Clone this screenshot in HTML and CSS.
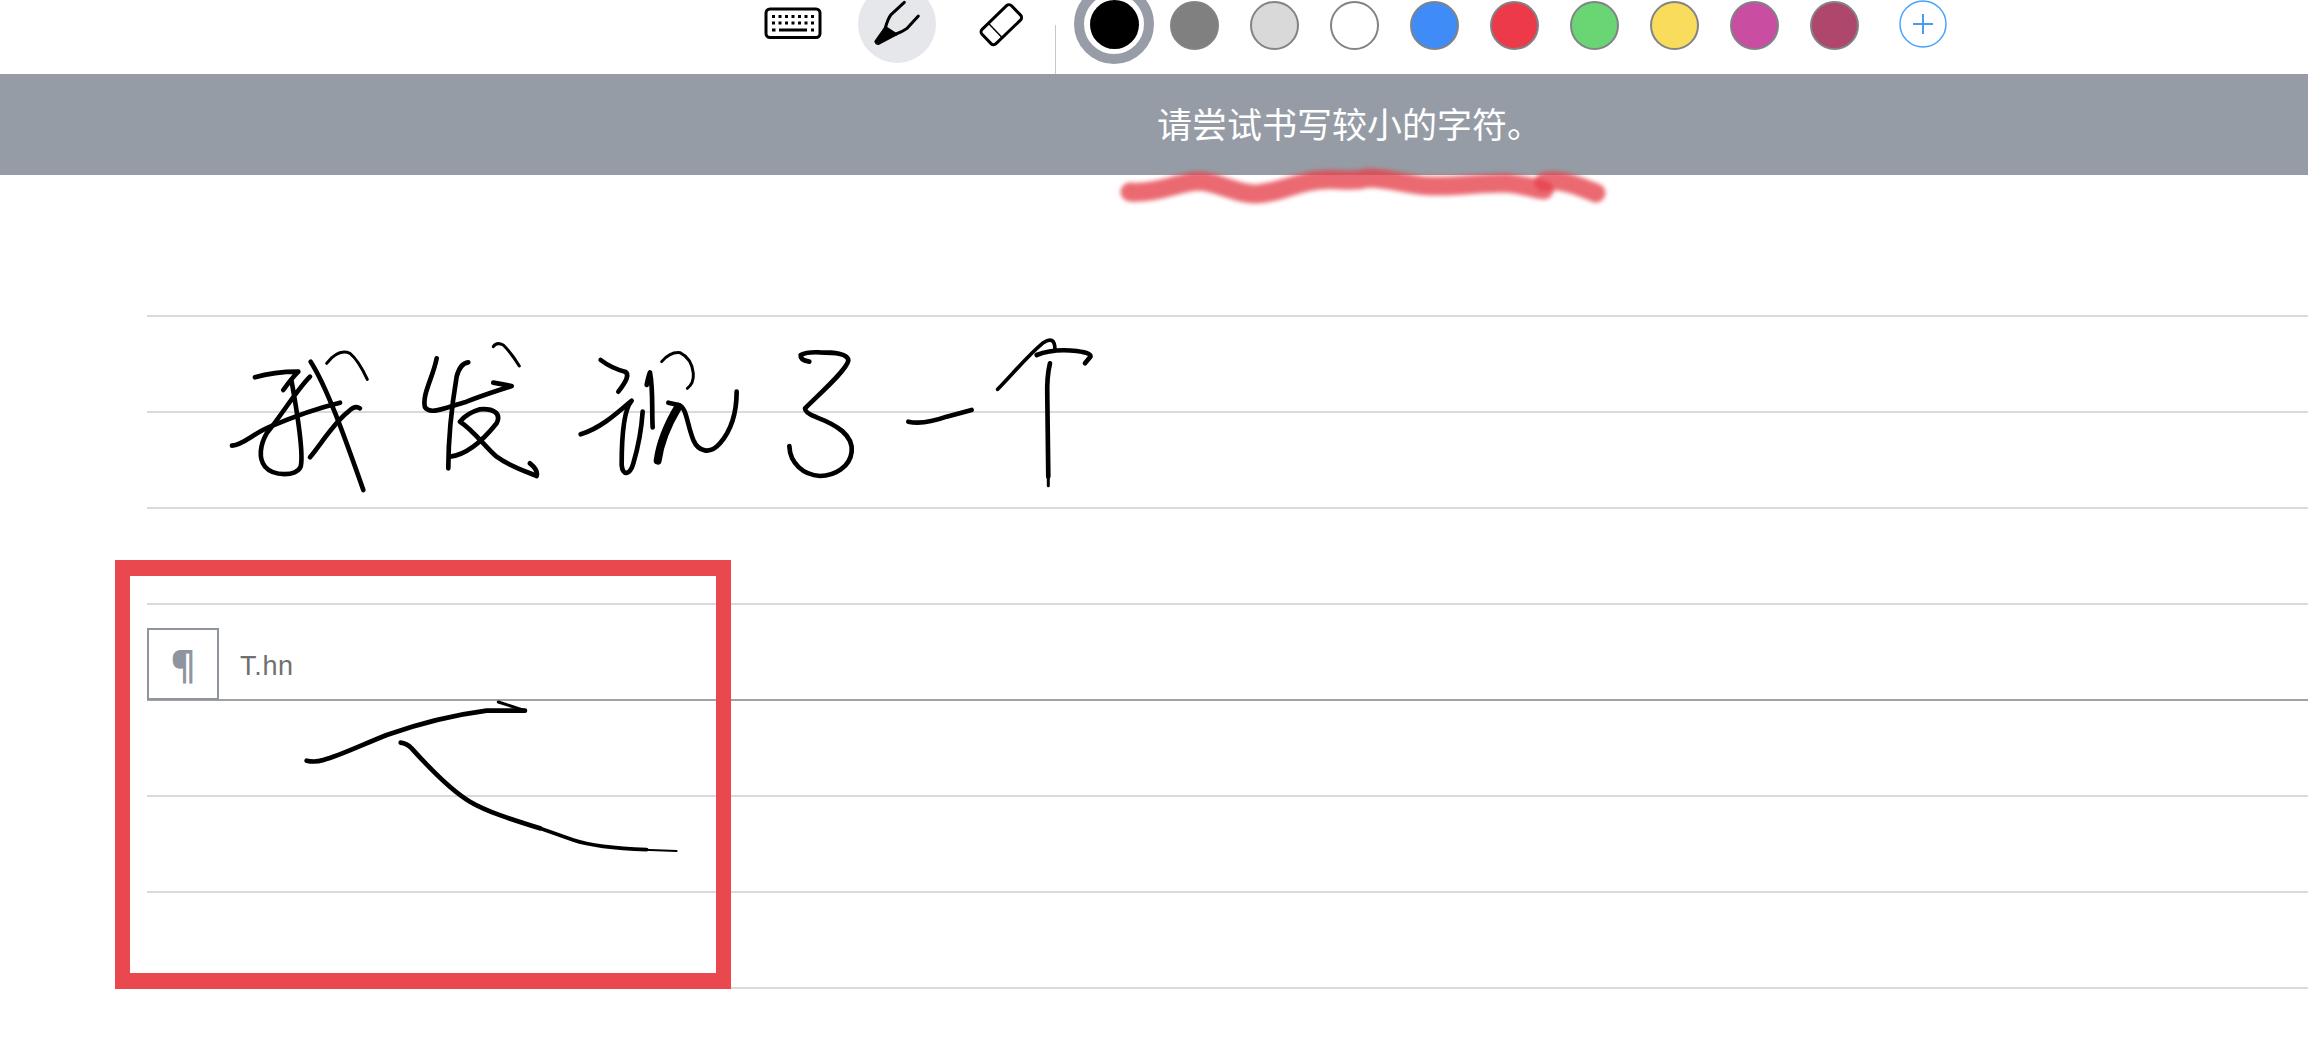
FILE: index.html
```html
<!DOCTYPE html>
<html lang="zh">
<head>
<meta charset="utf-8">
<title>Handwriting</title>
<link rel="stylesheet" href="styles.css">
</head>
<body>
<header class="toolbar">
  <svg class="kbd" viewBox="0 0 58 34" width="58" height="34">
    <rect class="ic" x="2" y="2" width="54" height="28.5" rx="4"/>
    <line class="keys" x1="8" y1="9.5" x2="50" y2="9.5"/>
    <line class="keys" x1="8" y1="16" x2="50" y2="16"/>
    <line class="keys" x1="8" y1="23" x2="11.5" y2="23"/>
    <line class="keys" x1="15" y1="23" x2="43" y2="23"/>
    <line class="keys" x1="47" y1="23" x2="50" y2="23"/>
  </svg>
  <div class="pen">
    <svg viewBox="0 0 78 78" width="78" height="78">
      <g transform="translate(2 15) scale(.3333)">
        <path class="tip" d="M45 124 Q47 132 55 133 L112 103 L76 80 Z"/>
        <path class="ic3" d="M76 84 Q84 55 94 43 L133 7"/>
        <path class="ic3" d="M108 102 Q128 95 140 86 L175 48"/>
      </g>
    </svg>
  </div>
  <svg class="eraser" viewBox="0 0 48 48" width="48" height="48">
    <g transform="translate(23.3 24.7) rotate(-44)">
      <rect class="ic" x="-20.5" y="-10" width="41" height="20" rx="3.5"/>
      <line class="thin" x1="-8.3" y1="-10" x2="-8.3" y2="10"/>
    </g>
  </svg>
  <div class="divider"></div>
  <div class="ring"><span class="dot black"></span></div>
  <div class="swatches">
    <span class="dot grey"></span>
    <span class="dot light"></span>
    <span class="dot white"></span>
    <span class="dot blue"></span>
    <span class="dot red"></span>
    <span class="dot green"></span>
    <span class="dot yellow"></span>
    <span class="dot magenta"></span>
    <span class="dot plum"></span>
  </div>
  <svg class="plus" viewBox="0 0 48 48" width="48" height="48">
    <circle class="plus-c" cx="24" cy="24" r="23"/>
    <path class="plus-l" d="M14 24H34M24 14V34"/>
  </svg>
</header>

<div class="banner"><span class="banner-text">请尝试书写较小的字符。</span></div>

<main class="sheet">
  <div class="row"></div>
  <div class="row"></div>
  <div class="row"></div>
  <div class="row para">
    <div class="pilcrow">¶</div>
    <span class="style-name">T.hn</span>
  </div>
  <div class="row dark"></div>
  <div class="row"></div>
  <div class="row"></div>
  <div class="row last"></div>
</main>

<div class="redbox"></div>

<svg class="ink" viewBox="0 0 2308 1045" width="2308" height="1045">
  <path class="smear" d="M1130 192 C1150 194 1170 186 1190 182 C1215 178 1232 194 1254 194 C1278 194 1295 182 1320 180 C1340 178 1350 183 1368 178 C1390 178 1405 185 1430 186 C1455 187 1480 183 1505 183 C1520 184 1532 188 1544 190"/>
  <path class="smear" d="M1544 182 C1562 178 1580 187 1596 193"/>

  <g transform="translate(210 320) scale(.3333)">
    <path class="s" d="M135 172 Q190 155 265 155 Q245 175 220 210"/>
    <path class="s" d="M300 170 C260 210 215 285 170 340 C150 375 145 415 165 440 C190 470 260 470 272 440 C282 400 262 280 245 185"/>
    <path class="s" d="M66 377 C100 375 130 340 180 320 C250 290 320 265 390 248"/>
    <path class="s" d="M302 125 C350 200 400 340 460 510"/>
    <path class="m" d="M350 130 Q385 85 420 100 Q445 120 472 178"/>
    <path class="s" d="M300 412 C335 370 370 310 415 275 Q435 255 450 265"/>
    <path class="s" d="M680 115 C670 170 635 225 645 262 C660 285 700 265 770 245 C820 225 870 210 905 198 L850 188"/>
    <path class="s" d="M775 127 Q750 130 740 170 C725 260 715 350 715 445"/>
    <path class="s" d="M720 410 C770 405 820 360 860 310 C875 280 850 265 810 268 Q770 280 750 305 C790 330 825 380 860 410 C900 440 950 455 980 468 Q985 450 960 430"/>
    <path class="m" d="M850 80 Q860 65 880 75 Q905 100 928 138"/>
  </g>

  <g transform="translate(570 340) scale(.3333)">
    <path class="s" d="M92 60 Q125 85 165 95 Q185 105 145 155"/>
    <path class="s" d="M32 283 C90 265 135 225 185 182 C160 210 155 300 155 375 C158 410 180 405 190 370 C205 320 215 260 218 215"/>
    <path class="s" d="M230 135 Q235 110 240 97 C250 150 245 210 248 262"/>
    <path class="m" d="M275 65 Q300 35 330 38 Q365 55 370 100 Q372 130 352 145"/>
    <path class="s" d="M295 188 L325 195 C350 200 350 250 370 300 C385 335 420 345 450 310 C480 275 500 220 500 155"/>
    <path class="b" d="M263 362 C270 310 295 250 325 200"/>
  </g>

  <g transform="translate(760 320) scale(.3333)">
    <path class="s" d="M148 125 Q120 120 122 105 Q140 95 180 97 C220 97 265 100 265 122 C260 150 180 220 135 265 Q135 280 170 292 C230 315 280 345 275 395 C270 440 225 468 180 468 C130 465 90 430 88 378"/>
    <path class="s" d="M445 305 Q490 315 560 290 L635 270"/>
    <path class="s2" d="M713 208 C760 160 800 110 850 68 Q885 45 885 90"/>
    <path class="s" d="M830 105 Q880 85 950 93 Q1000 100 990 112 L975 130"/>
    <path class="s" d="M870 130 Q860 170 862 230 L865 470"/>
    <path class="m" d="M865 460 L865 497"/>
  </g>

  <g transform="translate(280 680) scale(.3333)">
    <path class="s" d="M80 242 Q105 248 130 240 C180 227 240 197 320 165 C420 130 520 105 620 92 L735 92"/>
    <path class="m" d="M735 92 L655 66"/>
    <path class="s" d="M362 188 Q380 190 395 205 C440 255 510 330 570 365 C620 395 700 420 780 445"/>
    <path class="s2" d="M780 445 L880 480 C930 497 990 505 1100 509"/>
    <path class="t" d="M1090 509 L1190 513"/>
  </g>
</svg>
</body>
</html>
```

FILE: styles.css
```css
* { box-sizing: border-box; }

html, body {
  margin: 0;
  width: 2308px;
  height: 1045px;
  overflow: hidden;
  background: #fff;
  font-family: "Liberation Sans", "Noto Sans CJK SC", sans-serif;
}

.toolbar {
  display: flex;
  align-items: center;
  height: 74px;
  padding: 0 0 26px 764px;
  overflow: hidden;
}

.kbd { flex: none; }

.pen {
  flex: none;
  width: 78px;
  height: 78px;
  margin-left: 36px;
  border-radius: 50%;
  background: #e5e7eb;
}
.pen svg { display: block; }

.eraser { flex: none; margin-left: 42px; }

.divider {
  flex: none;
  align-self: flex-start;
  width: 1px;
  height: 49px;
  margin: 25px 0 0 29px;
  background: #c4c6ca;
}

.ring {
  flex: none;
  display: flex;
  align-items: center;
  justify-content: center;
  width: 80px;
  height: 80px;
  margin-left: 18px;
  border: 10px solid #979ca6;
  border-radius: 50%;
}

.swatches {
  flex: none;
  display: flex;
  gap: 31px;
  margin-left: 15.5px;
}

.dot {
  flex: none;
  display: block;
  width: 49px;
  height: 49px;
  border-radius: 50%;
  border: 2px solid #808388;
  transform: translateY(1px);
}
.ring .dot { border: 0; transform: none; }

.black { background: #000; }
.grey { background: #808080; }
.light { background: #d9d9d9; }
.white { background: #fff; }
.blue { background: #3f8cf8; }
.red { background: #ec3a48; }
.green { background: #69d673; }
.yellow { background: #f9dc5c; }
.magenta { background: #c94ea1; }
.plum { background: #ae476b; }

.plus { flex: none; margin-left: 40px; }
.plus-c { fill: #fff; stroke: #4aa3ff; stroke-width: 1.5; }
.plus-l { fill: none; stroke: #4a9cf0; stroke-width: 2; }

.ic { fill: none; stroke: #000; stroke-width: 3; }
.ic3 { fill: none; stroke: #000; stroke-width: 9; stroke-linecap: round; stroke-linejoin: round; }
.tip { fill: #000; stroke: #000; stroke-width: 4; stroke-linejoin: round; }
.thin { stroke: #000; stroke-width: 1.5; }
.keys { stroke: #000; stroke-width: 3; stroke-dasharray: 3 3.5; }
.kbd .keys:nth-of-type(n+3) { stroke-dasharray: none; }

.banner {
  display: flex;
  align-items: center;
  height: 101px;
  padding-left: 1157px;
  background: #969ca5;
  color: #fff;
  font-family: "Noto Sans CJK SC", sans-serif;
  font-size: 35px;
  font-weight: 400;
  line-height: 1;
}
.banner-text { margin-bottom: 4px; }

.sheet {
  padding: 140px 0 0 147px;
}

.row {
  display: flex;
  align-items: flex-end;
  height: 96px;
  border-top: 2px solid #dadada;
}
.row.dark { border-top-color: #a2a2a2; }
.row.last { height: 2px; }

.pilcrow {
  flex: none;
  display: flex;
  align-items: center;
  justify-content: center;
  width: 72px;
  height: 72px;
  border: 2px solid #8e95a0;
  color: #8f95a0;
  font-family: "Noto Sans", sans-serif;
  font-size: 38px;
  font-weight: 700;
  margin-bottom: -1px;
}

.style-name {
  margin: 0 0 18px 21px;
  color: #707070;
  font-size: 27px;
  letter-spacing: .7px;
  line-height: 30px;
}

.redbox {
  position: absolute;
  left: 115px;
  top: 560px;
  width: 616px;
  height: 429px;
  border-style: solid;
  border-width: 16px 15px;
  border-color: #ea484f;
}

.ink {
  position: absolute;
  left: 0;
  top: 0;
  pointer-events: none;
}
.ink path { fill: none; stroke: #000; stroke-linecap: round; stroke-linejoin: round; }
.ink .s { stroke-width: 14; }
.ink .s2 { stroke-width: 11; }
.ink .b { stroke-width: 24; }
.ink .m { stroke-width: 9; }
.ink .t { stroke-width: 6; }
.ink .smear {
  stroke: #e5404a;
  stroke-opacity: .78;
  stroke-width: 19;
  filter: blur(2px);
}
```
